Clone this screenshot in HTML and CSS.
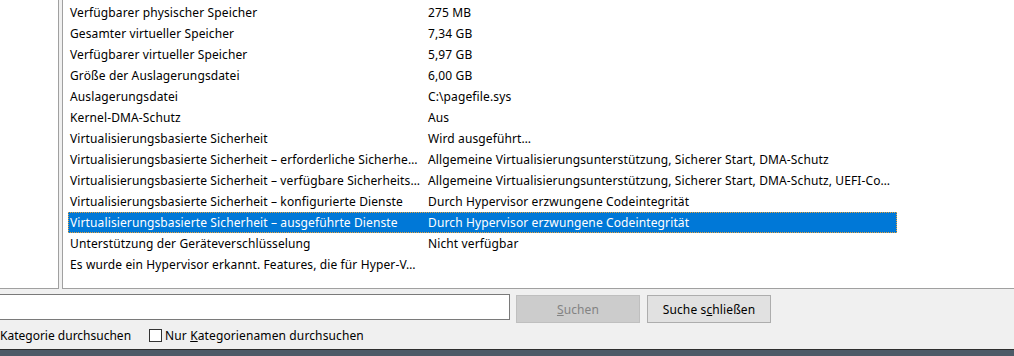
FILE: index.html
```html
<!DOCTYPE html>
<html lang="de">
<head>
<meta charset="utf-8">
<title>Systeminformationen</title>
<link rel="stylesheet" href="styles.css">
</head>
<body>
<div class="window">
  <div class="panes">
    <div class="tree"></div>
    <div class="list">
      <div class="row"><span class="c1">Verfügbarer physischer Speicher</span><span class="c2">275 MB</span></div>
      <div class="row"><span class="c1">Gesamter virtueller Speicher</span><span class="c2">7,34 GB</span></div>
      <div class="row"><span class="c1">Verfügbarer virtueller Speicher</span><span class="c2">5,97 GB</span></div>
      <div class="row"><span class="c1">Größe der Auslagerungsdatei</span><span class="c2">6,00 GB</span></div>
      <div class="row"><span class="c1">Auslagerungsdatei</span><span class="c2">C:\pagefile.sys</span></div>
      <div class="row"><span class="c1">Kernel-DMA-Schutz</span><span class="c2">Aus</span></div>
      <div class="row"><span class="c1">Virtualisierungsbasierte Sicherheit</span><span class="c2">Wird ausgeführt…</span></div>
      <div class="row"><span class="c1">Virtualisierungsbasierte Sicherheit – erforderliche Sicherhe…</span><span class="c2">Allgemeine Virtualisierungsunterstützung, Sicherer Start, DMA-Schutz</span></div>
      <div class="row"><span class="c1">Virtualisierungsbasierte Sicherheit – verfügbare Sicherheits…</span><span class="c2">Allgemeine Virtualisierungsunterstützung, Sicherer Start, DMA-Schutz, UEFI-Co…</span></div>
      <div class="row"><span class="c1">Virtualisierungsbasierte Sicherheit – konfigurierte Dienste</span><span class="c2">Durch Hypervisor erzwungene Codeintegrität</span></div>
      <div class="row selected"><span class="c1">Virtualisierungsbasierte Sicherheit – ausgeführte Dienste</span><span class="c2">Durch Hypervisor erzwungene Codeintegrität</span></div>
      <div class="row"><span class="c1">Unterstützung der Geräteverschlüsselung</span><span class="c2">Nicht verfügbar</span></div>
      <div class="row"><span class="c1">Es wurde ein Hypervisor erkannt. Features, die für Hyper-V…</span><span class="c2"></span></div>
    </div>
  </div>
  <div class="search">
    <div class="search-row">
      <div class="input"></div>
      <div class="btn disabled"><span><u>S</u>uchen</span></div>
      <div class="btn"><span>Suche s<u>c</u>hließen</span></div>
    </div>
    <div class="check-row">
      <div class="clip"><span>Kategorie durchsuchen</span></div>
      <div class="check"><span class="box"></span><span>Nur <u>K</u>ategorienamen durchsuchen</span></div>
    </div>
  </div>
  <div class="taskbar"></div>
</div>
</body>
</html>
```

FILE: styles.css
```css
html, body {
  margin: 0;
  padding: 0;
}
body {
  width: 1014px;
  height: 356px;
  overflow: hidden;
  background: #f0f0f0;
  font-family: "Noto Sans", "Open Sans", sans-serif;
  font-size: 12px;
  letter-spacing: 0.12px;
  color: #000;
}
.window {
  display: flex;
  flex-direction: column;
  height: 356px;
}
.panes {
  display: flex;
  gap: 3px;
  height: 289px;
  flex: none;
}
.tree {
  width: 58px;
  background: #fff;
  border-right: 1px solid #a0a0a0;
  border-bottom: 1px solid #a0a0a0;
}
.list {
  flex: 1;
  background: #fff;
  border-left: 1px solid #a0a0a0;
  border-bottom: 1px solid #a0a0a0;
  padding-top: 2px;
  overflow: hidden;
}
.row {
  display: flex;
  height: 21px;
  line-height: 21px;
  margin-left: 5px;
  width: 829px;
  white-space: nowrap;
}
.c1 {
  width: 358px;
  padding-left: 2px;
  box-sizing: border-box;
  overflow: hidden;
  flex: none;
}
.c2 {
  flex: 1;
  padding-left: 2px;
  overflow: hidden;
}
.row.selected {
  background: #0078d7;
  color: #fff;
  outline: 1px dotted #e8a33c;
  outline-offset: -1px;
}
.search {
  height: 60px;
  flex: none;
  display: flex;
  flex-direction: column;
}
.search-row {
  display: flex;
  align-items: flex-start;
  margin-top: 5px;
  height: 29px;
}
.input {
  width: 518px;
  margin-left: -10px;
  height: 24px;
  background: #fff;
  border: 1px solid #7a7a7a;
  flex: none;
}
.btn {
  width: 122px;
  height: 26px;
  margin-top: 1px;
  margin-left: 6px;
  background: #e1e1e1;
  border: 1px solid #adadad;
  display: flex;
  align-items: center;
  justify-content: center;
  flex: none;
}
.btn + .btn {
  margin-left: 7px;
}
.btn.disabled {
  background: #cccccc;
  border-color: #bfbfbf;
  color: #838383;
}
.check-row {
  display: flex;
  align-items: center;
  height: 18px;
  margin-top: 3px;
}
.clip {
  white-space: nowrap;
  letter-spacing: 0;
  flex: none;
}
.check {
  display: flex;
  align-items: center;
  margin-left: 18px;
  white-space: nowrap;
}
.box {
  display: inline-block;
  width: 11px;
  height: 11px;
  border: 1px solid #333;
  background: #fff;
  margin-right: 3px;
  flex: none;
}
.taskbar {
  flex: 1;
  background: #4d5a67;
  border-top: 1px solid #2e2e2e;
}
```
